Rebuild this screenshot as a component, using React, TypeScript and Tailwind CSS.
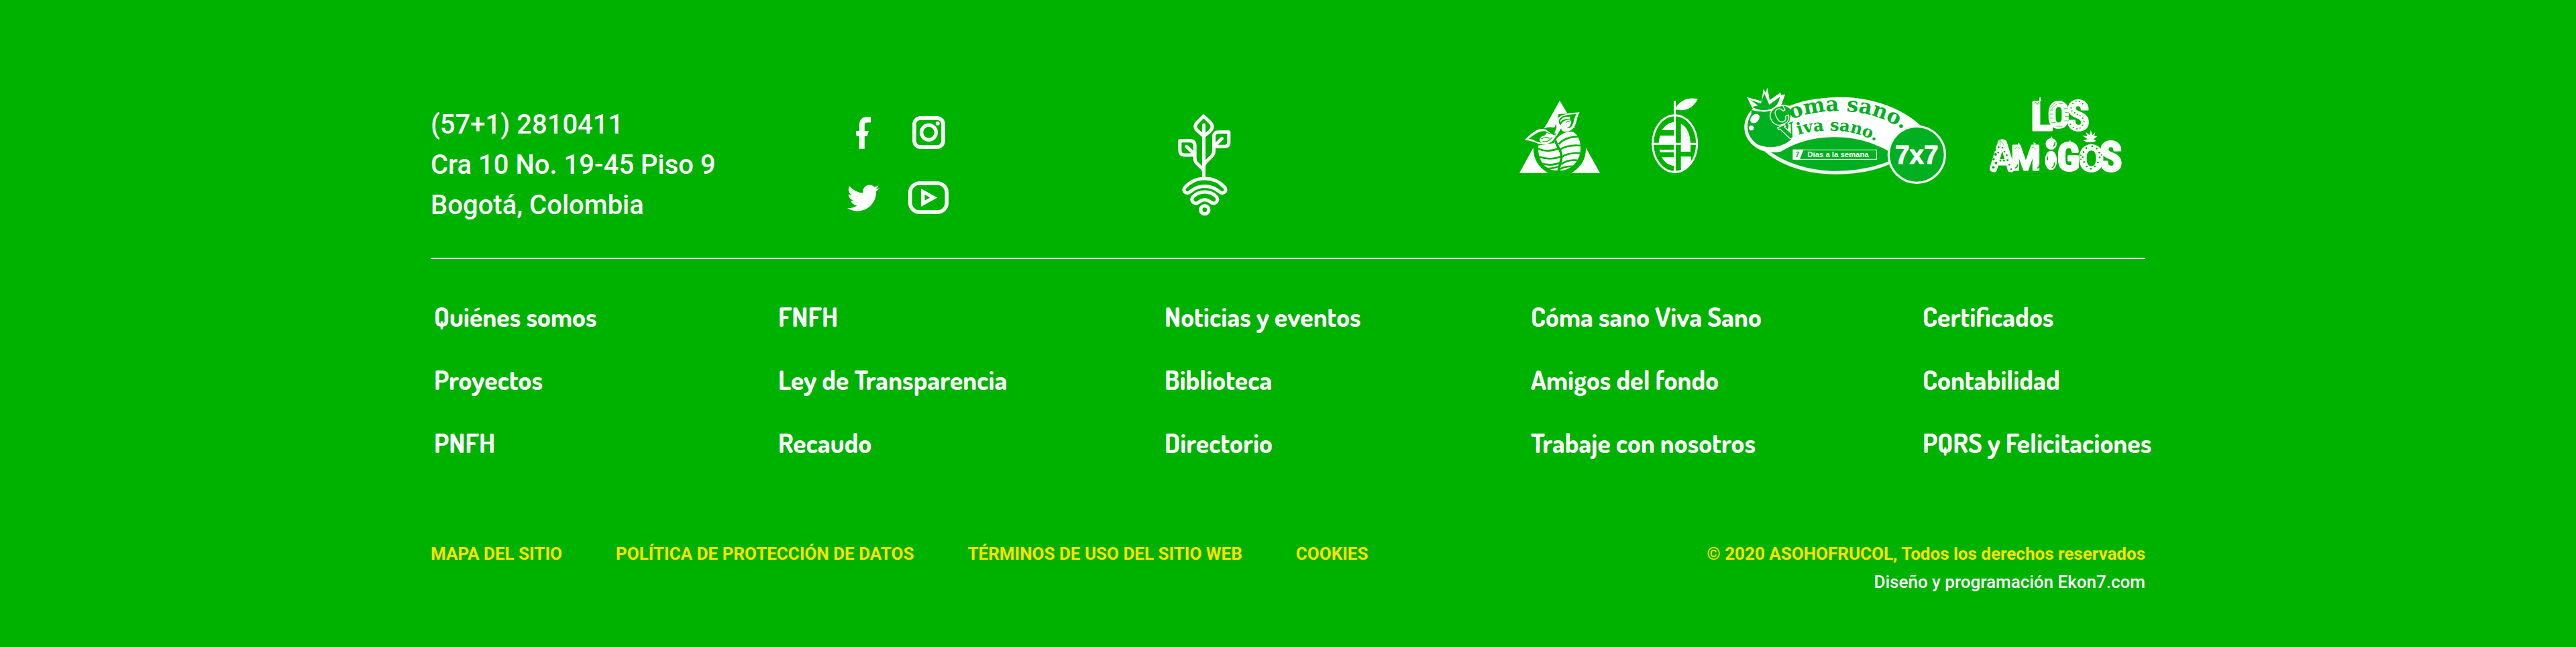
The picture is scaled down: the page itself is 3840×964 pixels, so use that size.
import React from "react";
import { FaTwitter } from "react-icons/fa";

const navColumns = [
  ["Quiénes somos", "Proyectos", "PNFH"],
  ["FNFH", "Ley de Transparencia", "Recaudo"],
  ["Noticias y eventos", "Biblioteca", "Directorio"],
  ["Cóma sano Viva Sano", "Amigos del fondo", "Trabaje con nosotros"],
  ["Certificados", "Contabilidad", "PQRS y Felicitaciones"],
];

const legalLinks = [
  "MAPA DEL SITIO",
  "POLÍTICA DE PROTECCIÓN DE DATOS",
  "TÉRMINOS DE USO DEL SITIO WEB",
  "COOKIES",
];

function FacebookIcon() {
  return (
    <svg viewBox="165 69 67 144" className="h-12 w-[22px]" fill="currentColor" aria-hidden="true">
      <path d="M180 213V156H167L165 132H180V108C180 83 192 69 212 69H232V94H216C208 94 204 98 204 106V132H223L216 156H204V213Z" />
    </svg>
  );
}

function InstagramIcon() {
  return (
    <svg viewBox="419 66 148 147" className="size-[49px]" fill="none" stroke="currentColor" aria-hidden="true">
      <rect x="428" y="74" width="130" height="131" rx="28" strokeWidth="17" />
      <circle cx="493" cy="139" r="33" strokeWidth="16" />
      <circle cx="533" cy="99" r="9" fill="currentColor" stroke="none" />
    </svg>
  );
}

function YoutubeIcon() {
  return (
    <svg viewBox="402 356 181 148" className="h-[49px] w-[60px]" fill="none" stroke="currentColor" aria-hidden="true">
      <rect x="410" y="365" width="165" height="130" rx="42" strokeWidth="17" />
      <path d="M459 389L533 430L459 471ZM476 416V443L499 430Z" fill="currentColor" fillRule="evenodd" stroke="none" />
    </svg>
  );
}

function PlantLogo() {
  return (
    <svg
      viewBox="107 59 236 456"
      className="h-[152px] w-[79px]"
      fill="none"
      stroke="currentColor"
      strokeWidth="15"
      strokeLinecap="round"
      strokeLinejoin="round"
      aria-hidden="true"
    >
      <path d="M221 68L248 94Q270 114 250 135L222 158L193 132Q174 114 195 94Z" />
      <path d="M222 108V343" />
      <path d="M315 204H275M315 204Q334 204 334 185V139H288Q267 139 267 160V224Q267 238 256 249L233 271Q222 282 222 298M303 168L273 198" />
      <path d="M136 242H178M136 242Q115 242 115 221V178H160Q182 178 182 200V256Q182 269 191 279L214 301Q222 309 222 322M145 204L178 236" />
      <path d="M138 386C185 334 268 334 315 386C330 404 306 420 293 407C252 373 201 373 160 407C147 420 123 404 138 386Z" />
      <path d="M175 427C202 400 250 400 277 427C293 446 273 464 256 455C235 438 217 438 196 455C179 464 159 446 175 427Z" />
      <circle cx="226" cy="487" r="18" strokeWidth="16" />
    </svg>
  );
}

function TriangleLogo() {
  return (
    <svg viewBox="75 72 402 348" className="h-[116px] w-[134px]" aria-hidden="true">
      <g fill="currentColor">
        <path d="M255 90L187 212Q200 200 240 195L250 150L290 148Z" />
        <path d="M137 300L75 413H203Q136 374 137 300Z" />
        <path d="M372 300L435 413H307Q374 374 372 300Z" />
        <path d="M187 208Q210 192 238 196L232 210Q210 206 187 212Z" />
        <path d="M315 195L324 213L308 203Z" />
      </g>
      <clipPath id="berry">
        <path d="M160 290C155 330 170 375 210 396C235 405 270 405 290 395C335 375 352 330 348 290C345 260 332 238 315 230C290 224 255 240 240 262L228 280Z" />
      </clipPath>
      <g clipPath="url(#berry)">
        <rect x="150" y="220" width="210" height="190" fill="currentColor" />
        <g fill="none" stroke="#00b200" strokeWidth="8">
          <path d="M150 302Q200 325 252 303M155 338Q210 360 262 340M172 370Q215 385 262 366M195 393Q225 395 250 383" />
          <path d="M250 285Q280 250 345 250M255 310Q290 285 352 291M264 342Q295 320 352 325M262 375Q290 350 345 358M248 402Q270 380 325 384" />
          <path d="M232 255C240 300 268 310 262 350C260 372 250 385 249 410" strokeWidth="11" />
        </g>
      </g>
      <path d="M98 267C130 232 165 205 196 221C215 235 228 245 240 243C232 262 220 285 178 286C150 284 135 266 98 267Z" fill="currentColor" />
      <path d="M116 261C145 239 165 222 190 226C205 236 190 245 172 252C160 264 166 274 175 278C150 276 135 260 116 261Z" fill="#00b200" />
      <path d="M172 262Q188 250 210 258M178 272Q200 280 222 254" fill="none" stroke="#00b200" strokeWidth="4" />
      <path d="M344 142C325 175 335 215 292 228C270 232 260 222 262 212L240 250L230 236L241 212C235 165 250 148 344 142Z" fill="currentColor" />
      <path d="M330 150C312 178 322 210 290 214C270 212 275 195 290 181L306 178C300 170 270 175 258 200C240 175 255 152 330 150Z" fill="#00b200" />
      <path d="M256 188C258 168 275 160 302 161L300 172C280 168 265 178 256 188Z" fill="currentColor" />
      <path d="M274 203C278 190 290 184 307 180C306 200 298 212 282 213Z" fill="currentColor" />
      <path d="M195 232L240 244M205 226L238 236" stroke="#00b200" strokeWidth="3" />
    </svg>
  );
}

function PearLogo() {
  return (
    <svg viewBox="666 78 207 336" className="h-28 w-[69px]" fill="currentColor" aria-hidden="true">
      <ellipse cx="770" cy="282" rx="99" ry="127" fill="none" stroke="currentColor" strokeWidth="9" />
      <path d="M765 90H774V410H765Z" />
      <path d="M668 278H872V287H668Z" />
      <path d="M774 121C798 84 835 74 873 82C850 128 815 138 774 130Z" />
      <path d="M768 185C744 187 725 200 712 222H768Z" />
      <path d="M704 246H768V280H698Q699 262 704 246Z" />
      <path d="M701 309H768V321H705Z" />
      <path d="M712 343H768V382C742 380 724 366 712 343Z" />
      <path d="M797 192C825 208 838 240 840 280V318H797Z" />
      <path d="M797 340H842V364C830 384 815 396 797 403Z" />
    </svg>
  );
}

function ComaSanoLogo() {
  return (
    <svg viewBox="42 60 921 432" className="h-36 w-[307px] overflow-visible" role="img" aria-label="Coma sano. Viva sano. 7x7">
      <defs>
        <path id="arc-coma" d="M198 243C290 182 400 164 500 167C620 170 710 205 830 285" />
        <path id="arc-viva" d="M240 302C300 264 380 252 460 254C540 256 600 275 700 325" />
      </defs>
      <path d="M150 346C220 280 360 270 470 275C560 278 650 300 720 340V397C650 428 570 442 470 442C340 442 225 405 150 346Z" fill="#00b020" />
      <path d="M150 346C225 412 340 449 470 449C570 449 650 431 715 403V388C650 416 560 434 470 434C360 434 255 402 180 350Z" fill="#f2f2f2" />
      <path d="M90 165C125 130 200 130 262 143C340 112 420 104 510 104C650 108 780 165 850 232L715 350C620 297 540 283 460 283C370 283 290 308 225 347C190 357 140 348 115 331C45 285 50 210 90 165Z" fill="#fff" />
      <path d="M92 180C60 230 75 290 125 318C170 336 235 330 275 288L255 250L272 165C255 142 235 141 215 145Q150 180 92 160Z" fill="#00b020" />
      <path d="M72 104L122 118L138 122L146 68L156 84L164 62L174 118L222 84L226 94L243 92L228 134C200 175 130 175 100 160Z" fill="#fff" />
      <path d="M88 117L135 133L150 88L172 138L220 103C215 140 190 162 150 163C125 163 105 155 98 147L122 142Z" fill="#00b020" />
      <path d="M95 160Q165 178 212 143" fill="none" stroke="#fff" strokeWidth="4" />
      <ellipse cx="108" cy="200" rx="24" ry="17" transform="rotate(-45 108 200)" fill="#fff" />
      <circle cx="92" cy="242" r="11" fill="#fff" />
      <g fontFamily="'DejaVu Serif', serif" fontWeight="700" fill="#00b020">
        <text fontSize="92">
          <textPath href="#arc-coma">
            <tspan fontSize="104" stroke="#fff" strokeWidth="8" paintOrder="stroke">C</tspan>oma sano.
          </textPath>
        </text>
        <text fontSize="73">
          <textPath href="#arc-viva">
            <tspan fontSize="88" stroke="#fff" strokeWidth="8" paintOrder="stroke">V</tspan>iva sano.
          </textPath>
        </text>
      </g>
      <rect x="279" y="340" width="373" height="42" fill="none" stroke="#fff" strokeWidth="3" />
      <path d="M278 338H326L308 383H278Z" fill="#fff" />
      <g fontFamily="'Liberation Sans', sans-serif" fontWeight="700">
        <text x="288" y="373" fontSize="34" fill="#00b020">7</text>
        <text x="343" y="372" fontSize="34" fill="#fff">Días a la semana</text>
        <circle cx="832" cy="361" r="126" fill="#00b020" stroke="#f2f2f2" strokeWidth="10" />
        <text x="832" y="402" fontSize="116" fill="#fff" stroke="#fff" strokeWidth="3" strokeLinejoin="round" textAnchor="middle">7x7</text>
      </g>
    </svg>
  );
}

const seeds: [number, number, number][] = [
  [104, 330, 6], [96, 352, 5], [106, 368, 6], [94, 388, 6], [102, 310, 4], [116, 322, 4], [118, 298, 4],
  [135, 300, 4], [144, 318, 4], [154, 334, 4], [126, 358, 4], [142, 358, 4], [158, 356, 4], [166, 376, 4],
  [174, 396, 4], [498, 320, 4], [510, 302, 4], [494, 342, 4], [500, 364, 4], [512, 384, 4], [530, 394, 4], [548, 384, 4],
  [562, 366, 4], [570, 344, 4], [568, 322, 4], [556, 304, 4], [536, 294, 4], [486, 334, 3], [486, 352, 3],
  [578, 332, 3], [442, 122, 3], [446, 136, 3], [458, 144, 3], [470, 152, 3], [482, 156, 3], [494, 168, 3],
  [500, 184, 3], [494, 200, 3], [482, 212, 3], [468, 216, 3], [452, 210, 3], [438, 196, 3], [494, 104, 3], [480, 94, 3],
  [464, 92, 3], [450, 102, 3],
];

function AmigosLogo() {
  return (
    <svg viewBox="72 72 600 348" className="h-[116px] w-[200px] overflow-visible" role="img" aria-label="Los Amigos">
      <g
        fontFamily="'Roboto', sans-serif"
        fontWeight="700"
        fill="#fff"
        stroke="#fff"
        strokeWidth="9"
        strokeLinejoin="round"
      >
        <text>
          <tspan x="262" y="221" fontSize="180">L</tspan>
          <tspan x="338" y="209" fontSize="160" fontFamily="'Roboto Condensed', 'Dosis', sans-serif">O</tspan>
          <tspan x="424" y="221" fontSize="186" fontFamily="'Roboto Condensed', 'Dosis', sans-serif">S</tspan>
        </text>
        <text>
          <tspan x="80" y="405" fontSize="188" fontFamily="'Dosis', sans-serif">A</tspan>
          <tspan x="174" y="400" fontSize="150">M</tspan>
          <tspan x="340" y="390" fontSize="90">i</tspan>
          <tspan x="380" y="401" fontSize="170" fontFamily="'Roboto Condensed', 'Dosis', sans-serif">G</tspan>
          <tspan x="476" y="404" fontSize="163">O</tspan>
          <tspan x="570" y="405" fontSize="186" fontFamily="'Roboto Condensed', 'Dosis', sans-serif">S</tspan>
        </text>
      </g>
      <g fill="#fff">
        <ellipse cx="353" cy="283" rx="25" ry="26" />
        <ellipse cx="352" cy="357" rx="27" ry="43" />
        <path d="M496 268L516 262L492 246L514 248L508 230L524 244L530 222L538 244L550 230L546 248L560 250L542 262L554 270L538 276H514Z" />
        <path d="M301 76L306 76L308 92H298ZM352 250L358 252L356 266H350ZM435 266L441 270L434 284ZM205 278L211 278L212 292H202ZM272 276L284 280L280 292Z" />
      </g>
      <g fill="none" stroke="#00b200" strokeWidth="2">
        <path d="M276 104L284 96L290 108L298 96L304 106M192 306L202 296L212 306M264 304L272 296L284 306" />
        <path d="M346 132H362M346 150H362M346 168H362M354 188H374M376 204H404M412 180H432M414 160H432M414 142H432M410 124H428M386 104H406" />
        <path d="M348 122L372 98M352 130L378 104" />
        <path d="M105 290L124 268L144 290M124 266V296" />
      </g>
      <g fill="none" stroke="#00b200" strokeWidth="5">
        <path d="M202 376Q202 390 190 392M300 376Q300 390 290 392M368 366Q368 384 356 390M370 276Q370 290 360 294M338 340Q335 348 337 356" />
      </g>
      <g fill="#00b200">
        {seeds.map(([x, y, r]) => (
          <circle key={`${x}-${y}`} cx={x} cy={y} r={r} />
        ))}
      </g>
    </svg>
  );
}

export default function App() {
  return (
    <footer className="bg-[#00b200] pt-[130px] pb-[76px] font-['Roboto',sans-serif] font-medium text-white">
      <div className="mx-auto max-w-[2556px]">
        <div className="grid h-[232px] grid-cols-[612fr_502fr_509fr_933fr] items-center">
          <address className="text-[40px] leading-[60px] whitespace-nowrap not-italic">
            <p>(57+1) 2810411</p>
            <p>Cra 10 No. 19-45 Piso 9</p>
            <p>Bogotá, Colombia</p>
          </address>
          <div className="grid grid-cols-[66px_66px] grid-rows-[49px_49px] place-items-center gap-x-[31px] gap-y-12">
            <a href="#facebook" aria-label="Facebook"><FacebookIcon /></a>
            <a href="#instagram" aria-label="Instagram"><InstagramIcon /></a>
            <a href="#twitter" aria-label="Twitter"><FaTwitter className="size-12" /></a>
            <a href="#youtube" aria-label="YouTube"><YoutubeIcon /></a>
          </div>
          <PlantLogo />
          <div className="flex items-center gap-[63px] self-start">
            <TriangleLogo />
            <PearLogo />
            <ComaSanoLogo />
            <AmigosLogo />
          </div>
        </div>
        <hr className="mt-[22px] border-t-2 border-white" />
        <nav className="mt-[60px] grid grid-cols-[minmax(0,513fr)_minmax(0,576fr)_minmax(0,546fr)_minmax(0,584fr)_minmax(0,332fr)] pl-[5px] font-['Dosis','Roboto_Condensed',sans-serif] text-[40px] leading-[50px] font-bold whitespace-nowrap">
          {navColumns.map((items) => (
            <ul key={items[0]} className="flex flex-col gap-11">
              {items.map((item) => (
                <li key={item}><a href="#">{item}</a></li>
              ))}
            </ul>
          ))}
        </nav>
        <div className="mt-[120px] flex justify-between text-[26px] leading-[42px] whitespace-nowrap">
          <ul className="flex gap-20 font-bold text-[#ffe000]">
            {legalLinks.map((item) => (
              <li key={item}><a href="#">{item}</a></li>
            ))}
          </ul>
          <div className="text-right">
            <p className="font-bold text-[#ffe000]">© 2020 ASOHOFRUCOL, Todos los derechos reservados</p>
            <p>Diseño y programación Ekon7.com</p>
          </div>
        </div>
      </div>
    </footer>
  );
}
